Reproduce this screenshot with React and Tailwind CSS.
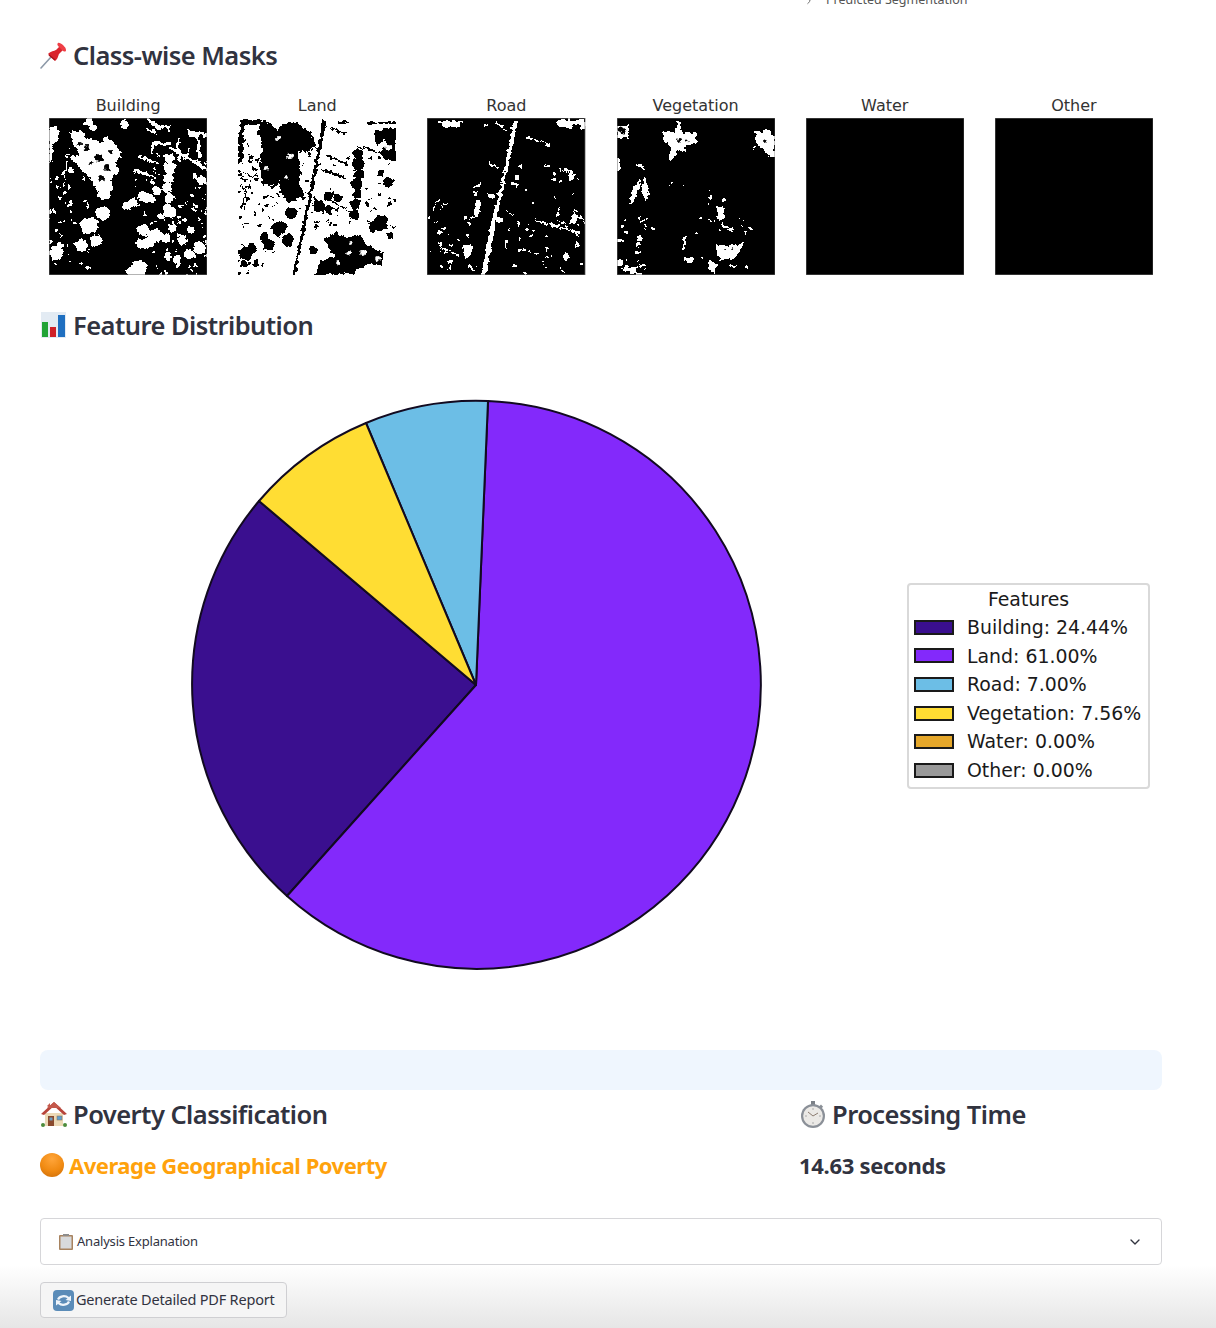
import { ChevronDown, ChevronRight } from 'lucide-react';

const rand = (seed) => () => {
    seed = (seed * 16807) % 2147483647;
    return seed / 2147483647;
};

// scatter small dots over a region of a mask
function specks(seed, n, x0, y0, x1, y1) {
    const r = rand(seed);
    return Array.from({ length: n }, () => [
        x0 + r() * (x1 - x0),
        y0 + r() * (y1 - y0),
        0.7 + r() * 1.3
    ]);
}

const MASKS = [
    {
        title: 'Building',
        bg: '#000',
        fg: '#fff',
        edge: '#666',
        polys: [
            '20,14 32,12 38,20 52,24 58,18 70,30 72,40 66,44 70,56 62,60 64,72 54,76 46,72 40,58 32,52 22,40 30,36 24,24',
            '0,10 8,8 10,22 4,26 3,44 0,46',
            '102,24 122,24 122,27 106,27 104,36 101,34',
            '130,20 132,44 129,44 128,22',
            '138,12 158,16 158,19 150,18 152,40 149,40 147,19 140,19',
            '96,0 100,0 112,8 122,6 122,13 119,13 118,10 108,11',
            '122,28 158,50 158,53 120,31'
        ],
        circles: [
            [55, 76, 6], [54, 95, 7], [40, 108, 8], [45, 105, 5], [32, 127, 6], [47, 123, 6], [7, 135, 7], [11, 128, 3],
            [120, 40, 5], [121, 50, 6], [120, 60, 5], [118, 70, 5], [120, 80, 5], [118, 90, 4], [121, 94, 6], [112, 98, 3],
            [84, 85, 5], [78, 88, 4], [92, 78, 4], [98, 80, 5], [104, 82, 3], [108, 73, 4],
            [94, 112, 6], [92, 126, 5], [106, 118, 7], [100, 124, 6], [116, 120, 4], [124, 110, 4], [133, 122, 5],
            [142, 112, 4], [150, 130, 6], [140, 136, 5], [118, 138, 4], [128, 142, 4], [90, 150, 8], [84, 154, 7],
            [152, 62, 4], [146, 58, 3], [8, 60, 2], [22, 52, 3], [14, 56, 2], [75, 6, 4], [40, 4, 4], [44, 10, 3]
        ],
        lines: [
            [88, 38, 110, 46, 2], [84, 52, 108, 60, 2], [20, 30, 14, 70, 1.2], [140, 30, 136, 42, 1.5], [96, 10, 108, 16, 2]
        ],
        dots: [
            ...specks(11, 50, 0, 60, 40, 150),
            ...specks(12, 45, 90, 100, 158, 157),
            ...specks(13, 25, 125, 30, 158, 100),
            ...specks(14, 18, 84, 30, 115, 100)
        ],
        holes: [[38, 30, 3], [50, 40, 4], [58, 50, 3], [42, 46, 2], [30, 26, 2], [52, 60, 3], [62, 34, 2]]
    },
    {
        title: 'Land',
        bg: '#fff',
        fg: '#000',
        edge: 'none',
        polys: [
            '20,8 32,5 38,12 46,6 58,4 66,10 72,12 78,28 68,34 60,32 61,60 62,80 50,84 42,74 42,62 38,68 24,66 22,48 24,30',
            '136,14 146,10 158,10 158,44 146,40 140,34 150,28 146,22 138,28',
            '86,122 98,114 108,120 122,116 128,126 146,136 142,148 130,146 116,155 76,157 82,144 96,138',
            '130,106 142,96 150,100 146,112 134,114',
            '2,2 20,2 30,4 28,7 6,7 5,28 2,34',
            '0,14 4,14 5,42 0,46'
        ],
        circles: [
            [60, 75, 6], [81, 88, 6], [90, 92, 4], [53, 95, 6], [40, 110, 7], [46, 108, 4], [50, 122, 6], [31, 127, 6],
            [26, 120, 4], [8, 135, 7], [14, 130, 4], [18, 145, 3], [6, 146, 3],
            [120, 36, 5], [120, 46, 6], [121, 56, 5], [119, 66, 6], [119, 76, 5], [117, 86, 5], [116, 96, 5], [90, 78, 4], [100, 80, 4],
            [150, 64, 5], [143, 56, 3], [75, 132, 4], [152, 118, 3]
        ],
        lines: [
            [87, 2, 56, 157, 3], [92, 10, 108, 16, 2], [88, 38, 110, 46, 2], [84, 52, 108, 60, 2], [100, 4, 112, 4, 1.5],
            [130, 5, 158, 5, 1.5], [120, 28, 140, 34, 1.5], [86, 80, 118, 96, 1.2], [0, 52, 20, 62, 1.2], [8, 70, 4, 90, 1.5], [24, 118, 34, 132, 1.5]
        ],
        dots: [
            ...specks(21, 55, 0, 60, 40, 157),
            ...specks(22, 40, 90, 40, 158, 110),
            ...specks(23, 28, 0, 20, 22, 80),
            ...specks(24, 28, 62, 20, 86, 110)
        ],
        holes: [[40, 20, 2], [52, 38, 3], [48, 60, 2], [110, 135, 2], [125, 135, 3], [100, 145, 2], [112, 125, 2], [140, 140, 2], [28, 50, 2], [150, 30, 3]]
    },
    {
        title: 'Road',
        bg: '#000',
        fg: '#fff',
        edge: '#666',
        polys: [
            '11,3 36,3 36,5 33,5 33,9 17,9 17,5 11,5 ',
            '129,2 158,2 158,11 154,11 154,7 146,7 146,9 132,9',
            '36,128 44,126 44,138 38,141',
            '46,92 50,80 54,82 52,98 47,98',
            '143,106 146,95 156,98 157,104 150,100 148,106',
            '87,2 91,2 85,30 69,105 59,157 54,157 60,122 77,52'
        ],
        circles: [[64, 78, 3], [73, 102, 3], [48, 76, 2.5], [144, 59, 3], [104, 118, 2], [150, 126, 2], [139, 138, 3], [106, 86, 1.5], [93, 132, 2], [125, 138, 1.5]],
        lines: [
            [68, 5, 79, 11, 1.5], [99, 19, 123, 27, 1.4], [61, 45, 71, 49, 1.8], [83, 64, 91, 68, 1.5], [136, 52, 148, 56, 1.5],
            [6, 92, 12, 80, 1.2], [14, 92, 20, 84, 1.2], [109, 103, 153, 115, 1.6], [16, 130, 31, 137, 1.5], [46, 70, 54, 66, 1.5],
            [24, 140, 22, 152, 1.5], [40, 148, 48, 152, 1.5], [80, 93, 88, 97, 1.2], [79, 122, 79, 132, 1], [130, 98, 132, 90, 2], [58, 5, 57, 9, 1.5]
        ],
        dots: [
            ...specks(31, 22, 2, 95, 50, 155),
            ...specks(32, 32, 82, 100, 156, 155),
            ...specks(33, 14, 90, 40, 156, 95)
        ],
        holes: []
    },
    {
        title: 'Vegetation',
        bg: '#000',
        fg: '#fff',
        edge: '#666',
        polys: [
            '46,14 58,14 60,3 64,3 64,14 78,15 80,24 70,28 66,34 60,32 58,38 54,46 52,38 54,30 48,22',
            '138,12 146,14 150,11 158,18 158,40 150,36 144,30 140,26',
            '12,86 16,72 22,60 24,66 18,80 15,86',
            '26,58 30,64 32,78 28,82 25,72',
            '98,126 108,128 127,125 122,134 118,140 104,142 100,136',
            '100,88 108,90 106,102 100,100',
            '67,138 78,140 74,145 68,144',
            '92,142 100,146 98,156 92,152',
            '112,148 120,146 118,150',
            '0,7 11,7 11,20 0,20',
            '0,40 2,40 3,50 0,52',
            '105,105 116,112 115,114 104,108'
        ],
        circles: [[4, 122, 2.5], [22, 120, 3], [21, 126, 2], [2, 145, 3], [16, 153, 4], [10, 150, 3], [66, 67, 1.5], [54, 66, 1], [83, 100, 1.5], [133, 111, 2], [36, 110, 1.5], [8, 102, 1.2], [22, 100, 1]],
        lines: [[68, 118, 66, 132, 1.8], [130, 104, 120, 100, 0.6], [20, 46, 28, 52, 1], [20, 155, 26, 157, 2]],
        dots: [...specks(41, 18, 0, 100, 30, 157), ...specks(42, 14, 80, 70, 130, 157), ...specks(43, 6, 138, 14, 158, 40)],
        holes: [[3, 11, 2.5], [6, 14, 2.5], [62, 22, 2], [70, 22, 1.5], [148, 24, 2], [108, 132, 1], [116, 130, 1]]
    },
    { title: 'Water', bg: '#000', fg: '#fff', edge: '#666', polys: [], circles: [], lines: [], dots: [], holes: [] },
    { title: 'Other', bg: '#000', fg: '#fff', edge: '#666', polys: [], circles: [], lines: [], dots: [], holes: [] }
];

const LEGEND = [
    { label: 'Building: 24.44%', swatch: 'bg-[#3a0f8f]' },
    { label: 'Land: 61.00%', swatch: 'bg-[#8329fb]' },
    { label: 'Road: 7.00%', swatch: 'bg-[#6cbee6]' },
    { label: 'Vegetation: 7.56%', swatch: 'bg-[#ffdd33]' },
    { label: 'Water: 0.00%', swatch: 'bg-[#e5a72a]' },
    { label: 'Other: 0.00%', swatch: 'bg-[#999999]' }
];

function Mask({ mask }) {
    const id = 'rough-' + mask.title;
    return (
        <svg viewBox="0 0 158 157" className="block w-full h-[157px] blur-[0.35px]" preserveAspectRatio="none">
            {/* roughens the edges so the blobs read like a thresholded raster */}
            <filter id={id} filterUnits="userSpaceOnUse" x="-10" y="-10" width="178" height="177">
                <feTurbulence type="fractalNoise" baseFrequency="0.22" numOctaves="2" seed={mask.title.length} />
                <feDisplacementMap in="SourceGraphic" scale="6" xChannelSelector="R" yChannelSelector="G" />
                <feGaussianBlur stdDeviation="0.4" />
                <feComponentTransfer>
                    <feFuncA type="discrete" tableValues="0 1" />
                </feComponentTransfer>
            </filter>
            <rect width="158" height="157" fill={mask.bg} />
            <g filter={`url(#${id})`}>
                {mask.polys.map((p, i) => <polygon key={i} points={p} fill={mask.fg} />)}
                {mask.circles.map((c, i) => <circle key={i} cx={c[0]} cy={c[1]} r={c[2]} fill={mask.fg} />)}
                {mask.lines.map((l, i) => <line key={i} x1={l[0]} y1={l[1]} x2={l[2]} y2={l[3]} strokeWidth={l[4]} stroke={mask.fg} />)}
                {mask.dots.map((c, i) => <circle key={i} cx={c[0]} cy={c[1]} r={c[2]} fill={mask.fg} />)}
                {mask.holes.map((c, i) => <circle key={i} cx={c[0]} cy={c[1]} r={c[2]} fill={mask.bg} />)}
            </g>
            <rect x="0.25" y="0.25" width="157.5" height="156.5" fill="none" stroke={mask.edge} strokeWidth="0.5" />
        </svg>
    );
}

function PieChart() {
    return (
        <svg viewBox="0 0 572 572" className="w-[572px] h-[572px] shrink-0">
            <g stroke="#120a20" strokeWidth="2" strokeLinejoin="round">
                <path d="M286 286 L97 497 A284 284 0 0 1 69 102 Z" fill="#3a0f8f" />
                <path d="M286 286 L298 2 A284 284 0 1 1 97 497 Z" fill="#8329fb" />
                <path d="M286 286 L176 24 A284 284 0 0 1 298 2 Z" fill="#6cbee6" />
                <path d="M286 286 L69 102 A284 284 0 0 1 176 24 Z" fill="#ffdd33" />
            </g>
        </svg>
    );
}

function PinIcon() {
    return (
        <svg viewBox="0 0 28 28" className="w-7 h-7 shrink-0">
            <path d="M1 27 L11 16" stroke="#8d99a8" strokeWidth="1.6" strokeLinecap="round" />
            <path d="M8 13 C11 10 14 10 16 9 L20 5 L23 9 L19 13 C18 15 18 18 15 20 Z" fill="#d9252e" />
            <path d="M18 2 C20 1 26 6 26 9 C26 11 24 11 22 9 L19 6 C17 4 17 3 18 2 Z" fill="#ef3f46" />
            <path d="M9 14 L15 19" stroke="#a8141c" strokeWidth="1.5" />
        </svg>
    );
}

function ChartIcon() {
    return (
        <svg viewBox="0 0 26 26" className="w-[26px] h-[26px] mx-px shrink-0">
            <rect x="0" y="0" width="25" height="26" fill="#e3ebf3" />
            <rect x="1" y="10" width="6" height="15" fill="#21a336" />
            <rect x="9" y="15" width="6" height="10" fill="#cf2027" />
            <rect x="17" y="3" width="7" height="22" fill="#1f6fc0" />
        </svg>
    );
}

function HouseIcon() {
    return (
        <svg viewBox="0 0 28 28" className="w-7 h-7 shrink-0">
            <path d="M5 13 L23 13 L23 26 L5 26 Z" fill="#ecd9b6" />
            <path d="M1 14 L14 2 L27 14 L24 15 L14 6 L4 15 Z" fill="#b8453a" />
            <path d="M7 6 L10 3 L10 8 Z M14 2 L21 8 L7 8 Z" fill="#c4594c" />
            <rect x="8" y="16" width="6" height="10" fill="#8a4a2d" />
            <rect x="9.5" y="17.5" width="3" height="3" fill="#6f9fc4" />
            <rect x="17" y="16" width="5" height="4" fill="#5f9fd0" stroke="#8a7a60" strokeWidth="0.6" />
            <circle cx="3" cy="25" r="2" fill="#4c8c3c" />
            <circle cx="25" cy="25" r="2" fill="#4c8c3c" />
        </svg>
    );
}

function StopwatchIcon() {
    return (
        <svg viewBox="0 0 28 28" className="w-7 h-7 shrink-0">
            <rect x="12" y="1" width="4" height="4" fill="#7c8188" />
            <rect x="21" y="5" width="3" height="3" transform="rotate(45 22 6)" fill="#8a8f96" />
            <circle cx="14" cy="16" r="12" fill="#8b9098" />
            <circle cx="14" cy="16" r="9.8" fill="#ebe9e6" />
            <path d="M14 16 L9 12 M14 16 L19 13" stroke="#8c7c70" strokeWidth="1" />
            <path d="M14 8 V10 M14 22 V24 M6 16 H8 M20 16 H22" stroke="#aaa" strokeWidth="1" />
        </svg>
    );
}

function OrangeDot() {
    return <span className="w-6 h-6 rounded-full shrink-0 bg-[radial-gradient(circle_at_50%_25%,#ffa53a,#f08a12_55%,#c96a08)]" />;
}

function ClipboardIcon() {
    return (
        <svg viewBox="0 0 16 16" className="w-4 h-4 shrink-0">
            <rect x="1" y="1" width="14" height="15" rx="1" fill="#a8835f" />
            <rect x="2.5" y="2.5" width="11" height="12" fill="#d8dadc" />
            <rect x="5" y="0" width="6" height="2" fill="#8d8d8d" />
        </svg>
    );
}

function RefreshIcon() {
    return (
        <svg viewBox="0 0 21 21" className="w-[21px] h-[21px] shrink-0">
            <rect width="21" height="21" rx="4" fill="#5b8cb8" />
            <path d="M4 9 A7 5.5 0 0 1 16 7 L18 5.5 L18 11 L12.5 10 L14.5 8.5 A5 3.5 0 0 0 6 10 Z" fill="#eef4fa" />
            <path d="M17 12 A7 5.5 0 0 1 5 14 L3 15.5 L3 10 L8.5 11 L6.5 12.5 A5 3.5 0 0 0 15 11 Z" fill="#eef4fa" />
        </svg>
    );
}

function Heading({ icon, children, className = '' }) {
    return (
        <h3 className={"flex items-center gap-[5px] text-[25.5px] leading-8 font-semibold tracking-[-0.55px] text-[#31333f] " + className}>
            {icon}
            <span>{children}</span>
        </h3>
    );
}

export default function App() {
    return (
        <div className="w-[1216px] h-[1328px] overflow-hidden bg-white font-['Noto_Sans',sans-serif] text-[#31333f]">
            {/* cut off expander label from the section above */}
            <div className="h-[10px] overflow-hidden flex items-end pl-[804px] gap-3 text-[12.5px] leading-5 text-[#555]">
                <ChevronRight className="w-2.5 h-2.5 mb-1" />
                <span>Predicted Segmentation</span>
            </div>

            <main className="pl-10 pr-[54px]">
                <Heading icon={<PinIcon />} className="mt-[29px]">Class-wise Masks</Heading>

                <div className="grid grid-cols-6 gap-x-[31px] px-[9px] mt-[25px] font-['DejaVu_Sans',sans-serif]">
                    {MASKS.map((mask) => (
                        <figure key={mask.title}>
                            <figcaption className="text-center text-[16px] leading-5 mb-[2px] text-[#333]">{mask.title}</figcaption>
                            <Mask mask={mask} />
                        </figure>
                    ))}
                </div>

                <Heading icon={<ChartIcon />} className="mt-[34px]">Feature Distribution</Heading>

                {/* pie and legend */}
                <div className="flex items-center pl-[150px] mt-[58px]">
                    <PieChart />
                    <div className="ml-[145px] mt-[2px] w-[243px] h-[206px] border-2 border-[#d9d9d9] rounded-[4px] px-[5px] pt-[1px] font-['DejaVu_Sans',sans-serif] text-[18.9px] text-[#1a1a1a]">
                        <div className="text-center leading-[26px] mb-px">Features</div>
                        {LEGEND.map((row) => (
                            <div key={row.label} className="flex items-center h-[28.6px] whitespace-nowrap">
                                <span className={"w-10 h-[15px] border-2 border-[#1a1a1a] shrink-0 " + row.swatch} />
                                <span className="ml-[13px]">{row.label}</span>
                            </div>
                        ))}
                    </div>
                </div>

                <div className="h-10 rounded-lg bg-[#eff6fe] mt-[79px]" />

                <div className="grid grid-cols-[759px_1fr] mt-[8px]">
                    <div>
                        <Heading icon={<HouseIcon />}>Poverty Classification</Heading>
                        <div className="flex items-center gap-[5px] mt-[19px] text-[22px] leading-8 font-bold tracking-[-0.5px] text-[#ffa20c]">
                            <OrangeDot />
                            <span>Average Geographical Poverty</span>
                        </div>
                    </div>
                    <div>
                        <Heading icon={<StopwatchIcon />}>Processing Time</Heading>
                        <div className="mt-[19px] text-[22px] leading-8 font-bold tracking-[-0.3px]">14.63 seconds</div>
                    </div>
                </div>

                <div className="flex items-center justify-between h-[47px] mt-[37px] pl-[17px] pr-[18px] border border-[#d6d6d9] rounded-[4px] bg-white">
                    <div className="flex items-center gap-[3px] text-[13px] tracking-[-0.2px]">
                        <ClipboardIcon />
                        <span>Analysis Explanation</span>
                    </div>
                    <ChevronDown className="w-4 h-4" />
                </div>
            </main>

            {/* fade at the bottom of the page, behind the button */}
            <div className="h-[63px] pt-[17px] px-10 bg-gradient-to-b from-white to-[#e6e6e6]">
                <button className="flex items-center gap-[2px] w-[247px] h-9 pl-[12px] border border-[#cfcfd2] rounded-[4px] bg-[#f5f5f5] text-[14.5px] tracking-[-0.2px]">
                    <RefreshIcon />
                    <span>Generate Detailed PDF Report</span>
                </button>
            </div>
        </div>
    );
}
